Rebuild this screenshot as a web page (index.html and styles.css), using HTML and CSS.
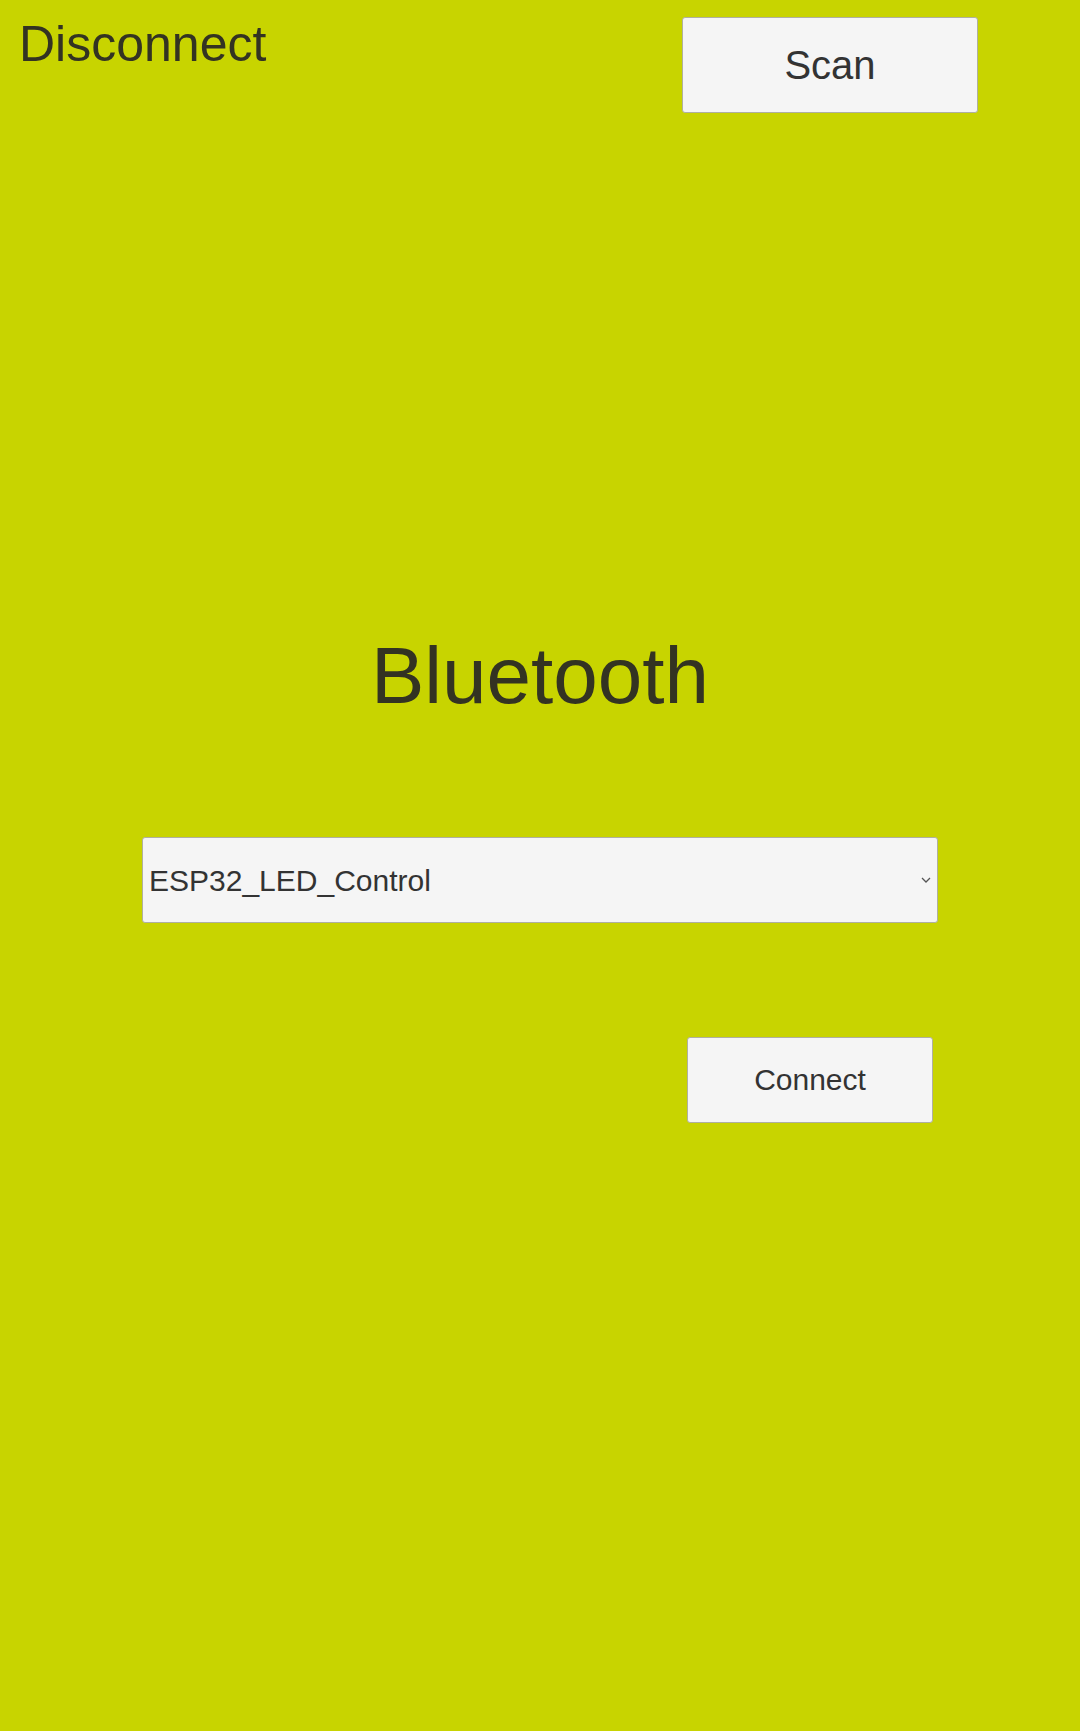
FILE: index.html
```html
<!DOCTYPE html>
<html>
<head>
<meta charset="utf-8">
<link rel="stylesheet" href="styles.css">
</head>
<body>
<div class="page">
  <header class="top">
    <div class="disconnect">Disconnect</div>
    <button class="btn scan">Scan</button>
  </header>
  <h1 class="title">Bluetooth</h1>
  <div class="select-wrap">
    <select class="device">
      <option>ESP32_LED_Control</option>
    </select>
    <svg class="chev" width="10" height="6" viewBox="0 0 10 6"><path d="M1 1 L5 5 L9 1" fill="none" stroke="#555" stroke-width="1.3"/></svg>
  </div>
  <div class="actions">
    <button class="btn connect">Connect</button>
  </div>
</div>
</body>
</html>
```
FILE: styles.css
```css
html, body {
  margin: 0;
  padding: 0;
  background: #c8d400;
  font-family: "Liberation Sans", Arial, sans-serif;
}
.page {
  width: 1080px;
  height: 1731px;
  display: flex;
  flex-direction: column;
}
.top {
  display: flex;
  align-items: flex-start;
  height: 113px;
}
.disconnect {
  margin-left: 19px;
  margin-top: 16px;
  font-size: 50px;
  line-height: 57px;
  color: #333322;
}
.btn {
  background: #f5f5f5;
  border: 1px solid #b0b0a0;
  border-radius: 3px;
  color: #333333;
  font-family: "Liberation Sans", Arial, sans-serif;
  padding: 0;
  box-sizing: border-box;
}
.scan {
  margin-left: auto;
  margin-right: 102px;
  margin-top: 17px;
  width: 296px;
  height: 96px;
  font-size: 40px;
}
.title {
  margin: 517px 0 0 0;
  font-weight: normal;
  font-size: 80px;
  line-height: 92px;
  text-align: center;
  color: #333322;
}
.select-wrap {
  position: relative;
  margin: 115px 0 0 142px;
  width: 796px;
  height: 86px;
}
.device {
  appearance: none;
  -webkit-appearance: none;
  width: 100%;
  height: 100%;
  box-sizing: border-box;
  background: #f5f5f5;
  border: 1px solid #b0b0a0;
  border-radius: 3px;
  padding: 0 0 0 6px;
  font-family: "Liberation Sans", Arial, sans-serif;
  font-size: 30px;
  color: #333333;
  outline: none;
}
.chev {
  position: absolute;
  left: 779px;
  top: 40px;
}
.actions {
  display: flex;
  justify-content: flex-end;
  margin: 114px 147px 0 0;
}
.connect {
  width: 246px;
  height: 86px;
  font-size: 30px;
}
```
